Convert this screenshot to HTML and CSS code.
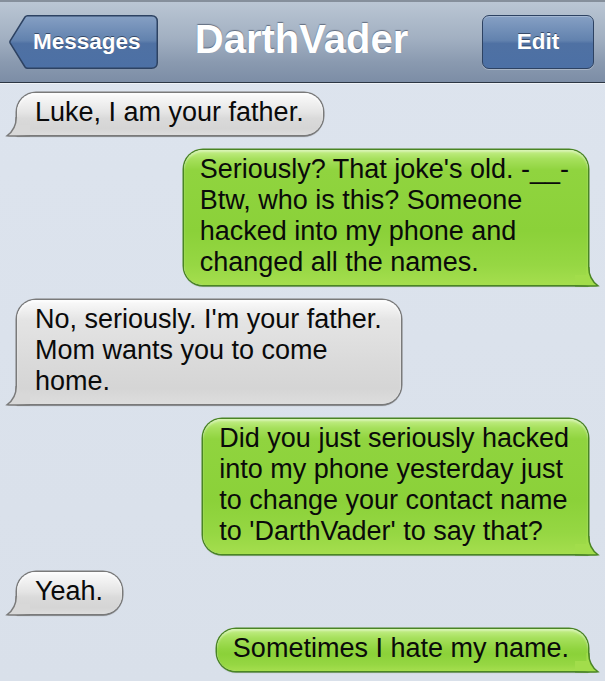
FILE: index.html
```html
<!DOCTYPE html>
<html>
<head>
<meta charset="utf-8">
<title>DarthVader</title>
<link rel="stylesheet" href="styles.css">
</head>
<body>
<div class="phone">
  <header class="navbar">
    <a class="back-btn">
      <svg class="back-shape" width="149" height="54" viewBox="0 0 149 54">
        <defs>
          <linearGradient id="btnGrad" x1="0" y1="0" x2="0" y2="1">
            <stop offset="0" stop-color="#86a0c4"/>
            <stop offset="0.47" stop-color="#6282ae"/>
            <stop offset="0.53" stop-color="#4f71a3"/>
            <stop offset="1" stop-color="#4c70a5"/>
          </linearGradient>
        </defs>
        <path d="M18.5 0.75 L142.5 0.75 Q148.25 0.75 148.25 6.5 L148.25 47.5 Q148.25 53.25 142.5 53.25 L18.5 53.25 Q17 53.25 16 52 L1.2 28.2 Q0.6 27 1.2 25.8 L16 2 Q17 0.75 18.5 0.75 Z" fill="url(#btnGrad)" stroke="#2d4262" stroke-width="1.5"/>
      </svg>
      <span class="btn-label">Messages</span>
    </a>
    <h1 class="title">DarthVader</h1>
    <a class="edit-btn"><span class="btn-label">Edit</span></a>
  </header>

  <main class="thread">
    <div class="bubble in">Luke, I am your father.<svg class="tail" viewBox="0 0 24 22"><path class="tail-fill" d="M12.5 2 L10.25 2 C10.25 11 7 16.5 1 20.75 C5 21.6 10 21 24 20.75 L24 10 L12.5 10 Z"/><path class="tail-line" d="M10.25 2 C10.25 11 7 16.5 1 20.75 C5 21.6 10 20.75 24 20.75"/></svg></div>

    <div class="bubble out">Seriously? That joke's old. -__-<br>Btw, who is this? Someone<br>hacked into my phone and<br>changed all the names.<svg class="tail" viewBox="0 0 24 22"><path class="tail-fill" d="M12.5 2 L10.25 2 C10.25 11 7 16.5 1 20.75 C5 21.6 10 21 24 20.75 L24 10 L12.5 10 Z"/><path class="tail-line" d="M10.25 2 C10.25 11 7 16.5 1 20.75 C5 21.6 10 20.75 24 20.75"/></svg></div>

    <div class="bubble in">No, seriously. I'm your father.<br>Mom wants you to come<br>home.<svg class="tail" viewBox="0 0 24 22"><path class="tail-fill" d="M12.5 2 L10.25 2 C10.25 11 7 16.5 1 20.75 C5 21.6 10 21 24 20.75 L24 10 L12.5 10 Z"/><path class="tail-line" d="M10.25 2 C10.25 11 7 16.5 1 20.75 C5 21.6 10 20.75 24 20.75"/></svg></div>

    <div class="bubble out">Did you just seriously hacked<br>into my phone yesterday just<br>to change your contact name<br>to 'DarthVader' to say that?<svg class="tail" viewBox="0 0 24 22"><path class="tail-fill" d="M12.5 2 L10.25 2 C10.25 11 7 16.5 1 20.75 C5 21.6 10 21 24 20.75 L24 10 L12.5 10 Z"/><path class="tail-line" d="M10.25 2 C10.25 11 7 16.5 1 20.75 C5 21.6 10 20.75 24 20.75"/></svg></div>

    <div class="bubble in later">Yeah.<svg class="tail" viewBox="0 0 24 22"><path class="tail-fill" d="M12.5 2 L10.25 2 C10.25 11 7 16.5 1 20.75 C5 21.6 10 21 24 20.75 L24 10 L12.5 10 Z"/><path class="tail-line" d="M10.25 2 C10.25 11 7 16.5 1 20.75 C5 21.6 10 20.75 24 20.75"/></svg></div>

    <div class="bubble out">Sometimes I hate my name.<svg class="tail" viewBox="0 0 24 22"><path class="tail-fill" d="M12.5 2 L10.25 2 C10.25 11 7 16.5 1 20.75 C5 21.6 10 21 24 20.75 L24 10 L12.5 10 Z"/><path class="tail-line" d="M10.25 2 C10.25 11 7 16.5 1 20.75 C5 21.6 10 20.75 24 20.75"/></svg></div>
  </main>
</div>
</body>
</html>
```

FILE: styles.css
```css
* {
  box-sizing: border-box;
  margin: 0;
  padding: 0;
}

html, body {
  background: #dbe2ec;
}

body {
  width: 605px;
  height: 681px;
  overflow: hidden;
  font-family: "Liberation Sans", Arial, Helvetica, sans-serif;
}

.phone {
  width: 605px;
  height: 681px;
  background: linear-gradient(#dde4ee, #d9e0ea);
}

/* ---------- navigation bar ---------- */
.navbar {
  height: 83px;
  display: grid;
  grid-template-columns: 1fr auto 1fr;
  align-items: center;
  padding: 0 11px 0 9px;
  border-top: 2px solid #858f9b;
  border-bottom: 1px solid #2c3644;
  background: linear-gradient(#bac6d4 0%, #a2b0c2 45%, #8a9ab0 75%, #7c8da6 100%);
  box-shadow: 0 1px 0 #eef2f6;
}

.back-btn {
  justify-self: start;
  position: relative;
  width: 149px;
  height: 54px;
  display: flex;
  align-items: center;
  padding-left: 24px;
}

.back-shape {
  position: absolute;
  left: 0;
  top: 0;
}

.btn-label {
  position: relative;
  color: #fff;
  font-weight: bold;
  font-size: 22.5px;
  text-shadow: 0 -1px 0 rgba(10, 20, 40, 0.55);
}

.title {
  font-size: 40px;
  font-weight: bold;
  color: #fff;
  margin-bottom: 5px;
  text-shadow: 0 -1px 1px rgba(40, 50, 70, 0.55);
  white-space: nowrap;
}

.edit-btn {
  justify-self: end;
  width: 112px;
  height: 54px;
  border: 1.5px solid #2d4262;
  border-radius: 7px;
  background: linear-gradient(#86a0c4 0%, #6282ae 47%, #4f71a3 53%, #4c70a5 100%);
  display: flex;
  align-items: center;
  justify-content: center;
  box-shadow: 0 1px 0 rgba(255, 255, 255, 0.3), inset 0 1px 0 rgba(255, 255, 255, 0.25);
}

/* ---------- thread ---------- */
.thread {
  display: flex;
  flex-direction: column;
  gap: 15px;
  padding: 10px 17px 0 17px;
}

.bubble {
  position: relative;
  font-size: 27px;
  line-height: 31px;
  color: #0a0a0a;
  white-space: nowrap;
  border-radius: 19px;
}

.bubble.in {
  align-self: flex-start;
  padding: 4px 19px 7px 18px;
  border-bottom-left-radius: 0;
  background: linear-gradient(#fbfbfb 0px, #f1f1f1 9px, #e4e4e4 20px, #dadada 60%, #d5d5d5 85%, #dddddd 100%);
  box-shadow: 0 0 0 1.5px #7a7a7a, 0 2px 1px rgba(0, 0, 0, 0.35), inset 0 2px 2px rgba(255, 255, 255, 0.6);
}

.bubble.out {
  align-self: flex-end;
  padding: 4px 19px 7px 16px;
  border-bottom-right-radius: 0;
  background: linear-gradient(#c6f08c 0px, #a6e05c 9px, #90d43f 20px, #8bd139 60%, #96d743 85%, #a5de4e 100%);
  box-shadow: 0 0 0 1.5px #4a8524, 0 2px 1px rgba(0, 40, 0, 0.3), inset 0 2px 2px rgba(255, 255, 255, 0.35);
}

.bubble.later {
  margin-top: 3px;
}

.tail {
  position: absolute;
  bottom: -2px;
  width: 24px;
  height: 22px;
  overflow: visible;
}

.in .tail {
  left: -11px;
}

.out .tail {
  right: -11px;
  transform: scaleX(-1);
}

.tail-line {
  fill: none;
  stroke-width: 1.5;
}

.in .tail-fill {
  fill: #d8d8d8;
}

.in .tail-line {
  stroke: #7a7a7a;
}

.out .tail-fill {
  fill: #a2dd4b;
}

.out .tail-line {
  stroke: #4a8524;
}
```
